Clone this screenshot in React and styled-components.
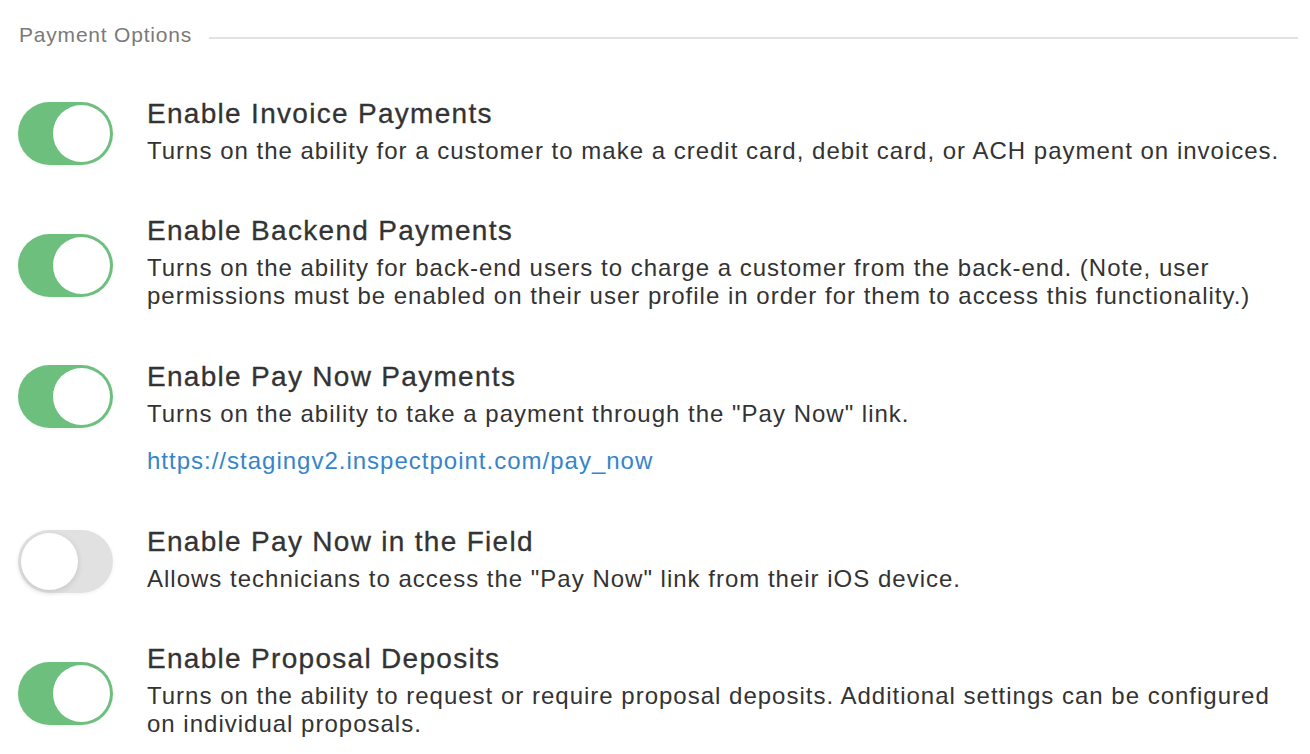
import styled, { createGlobalStyle } from 'styled-components';

const GlobalStyle = createGlobalStyle`
    body {
        margin: 0;
        background: #ffffff;
        font-family: "Liberation Sans", Arial, sans-serif;
        color: #333333;
    }
`;

const options = [
    {
        title: 'Enable Invoice Payments',
        text: 'Turns on the ability for a customer to make a credit card, debit card, or ACH payment on invoices.',
        on: true,
    },
    {
        title: 'Enable Backend Payments',
        text: 'Turns on the ability for back-end users to charge a customer from the back-end. (Note, user permissions must be enabled on their user profile in order for them to access this functionality.)',
        on: true,
    },
    {
        title: 'Enable Pay Now Payments',
        text: 'Turns on the ability to take a payment through the "Pay Now" link.',
        link: 'https://stagingv2.inspectpoint.com/pay_now',
        on: true,
    },
    {
        title: 'Enable Pay Now in the Field',
        text: 'Allows technicians to access the "Pay Now" link from their iOS device.',
        on: false,
    },
    {
        title: 'Enable Proposal Deposits',
        text: 'Turns on the ability to request or require proposal deposits. Additional settings can be configured on individual proposals.',
        on: true,
    },
];

function Toggle({ on }) {
    return (
        <Track $on={on}>
            <Knob $on={on} />
        </Track>
    );
}

export default function App() {
    return (
        <Page>
            <GlobalStyle />
            <Legend>
                <LegendText>Payment Options</LegendText>
                <LegendLine />
            </Legend>
            <List>
                {options.map((o) => (
                    <Item key={o.title}>
                        <Row>
                            <Toggle on={o.on} />
                            <Body>
                                <Title>{o.title}</Title>
                                <Description>{o.text}</Description>
                            </Body>
                        </Row>
                        {o.link && <Link href={o.link}>{o.link}</Link>}
                    </Item>
                ))}
            </List>
        </Page>
    );
}

const Page = styled.div`
    padding: 22px 12px 0 18px;
`;

const Legend = styled.div`
    display: flex;
    align-items: center;
    gap: 17px;
    margin-left: 1px;
`;

const LegendText = styled.span`
    font-size: 21px;
    line-height: 26px;
    letter-spacing: 0.8px;
    color: #7a7a7a;
`;

const LegendLine = styled.div`
    flex: 1;
    height: 2px;
    margin-top: 5px;
    background: #e2e2e2;
`;

const List = styled.div`
    display: flex;
    flex-direction: column;
    gap: 49px;
    margin-top: 48px;
`;

const Item = styled.div`
    display: flex;
    flex-direction: column;
`;

const Row = styled.div`
    display: flex;
    align-items: center;
    gap: 34px;
`;

const Track = styled.div`
    flex: none;
    width: 95px;
    height: 63px;
    margin-top: 6px;
    box-sizing: border-box;
    padding: 3px;
    border-radius: 32px;
    display: flex;
    justify-content: ${(p) => (p.$on ? 'flex-end' : 'flex-start')};
    background: ${(p) => (p.$on ? '#6dbf7d' : '#e1e1e1')};
    box-shadow: 0 1px 4px rgba(0, 0, 0, 0.06);
`;

const Knob = styled.div`
    width: 57px;
    height: 57px;
    border-radius: 50%;
    background: #ffffff;
    box-shadow: ${(p) => (p.$on ? 'none' : '0 2px 6px rgba(0, 0, 0, 0.12)')};
`;

const Body = styled.div`
    display: flex;
    flex-direction: column;
    min-width: 0;
`;

const Title = styled.div`
    font-size: 28px;
    line-height: 34px;
    letter-spacing: 1.3px;
    color: #333333;
    -webkit-text-stroke: 0.3px #333333;
    margin-bottom: 6px;
`;

const Description = styled.div`
    font-size: 24px;
    line-height: 28px;
    letter-spacing: 1px;
    color: #333333;
`;

const Link = styled.a`
    margin: 19px 0 0 129px;
    font-size: 24px;
    line-height: 28px;
    letter-spacing: 1px;
    color: #3585c9;
    text-decoration: none;
`;
